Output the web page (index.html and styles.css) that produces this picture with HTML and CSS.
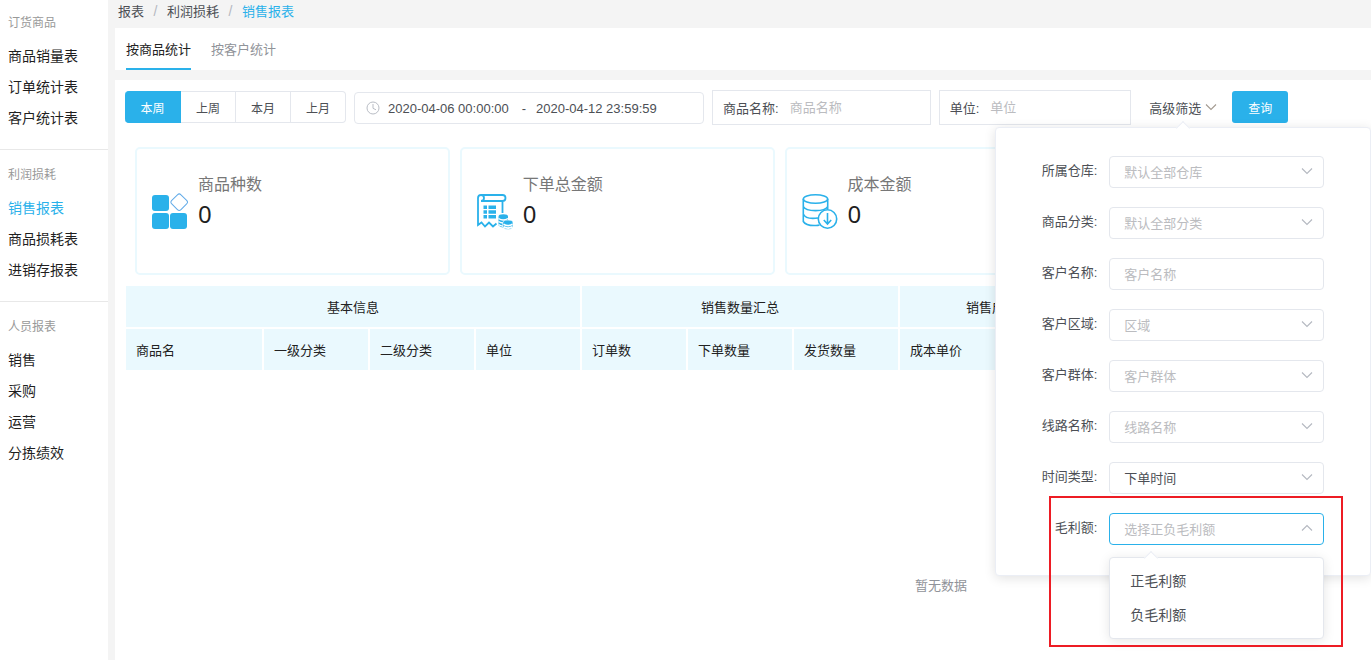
FILE: index.html
```html
<!DOCTYPE html>
<html lang="zh-CN">
<head>
<meta charset="utf-8">
<title>销售报表</title>
<link rel="stylesheet" href="styles.css">
</head>
<body>
<svg class="sprite" aria-hidden="true">
  <symbol id="chevron" viewBox="0 0 12 12"><path d="M1 3.5 6 8.5 11 3.5" fill="none" stroke="currentColor" stroke-width="1.1"/></symbol>
</svg>
<div class="layout">
  <nav class="sidebar">
    <section class="group">
      <h2 class="group-title">订货商品</h2>
      <a class="item" href="#">商品销量表</a>
      <a class="item" href="#">订单统计表</a>
      <a class="item" href="#">客户统计表</a>
    </section>
    <section class="group">
      <h2 class="group-title">利润损耗</h2>
      <a class="item active" href="#">销售报表</a>
      <a class="item" href="#">商品损耗表</a>
      <a class="item" href="#">进销存报表</a>
    </section>
    <section class="group">
      <h2 class="group-title">人员报表</h2>
      <a class="item" href="#">销售</a>
      <a class="item" href="#">采购</a>
      <a class="item" href="#">运营</a>
      <a class="item" href="#">分拣绩效</a>
    </section>
  </nav>
  <main class="main">
    <div class="breadcrumb">
      <a href="#">报表</a><span class="sep">/</span><a href="#">利润损耗</a><span class="sep">/</span><a class="current" href="#">销售报表</a>
    </div>
    <div class="tabs" role="tablist">
      <button class="tab selected" role="tab" aria-selected="true">按商品统计</button>
      <button class="tab" role="tab" aria-selected="false">按客户统计</button>
    </div>
    <div class="content">
      <div class="toolbar">
        <div class="periods">
          <button class="period on">本周</button>
          <button class="period">上周</button>
          <button class="period">本月</button>
          <button class="period">上月</button>
        </div>
        <div class="range">
          <svg class="clock" viewBox="0 0 14 14" fill="none" stroke="currentColor"><circle cx="7" cy="7" r="6"/><path d="M7 3v4.300l3 1.500"/></svg>
          <input class="date" aria-label="开始时间" value="2020-04-06 00:00:00">
          <span class="dash">-</span>
          <input class="date" aria-label="结束时间" value="2020-04-12 23:59:59">
        </div>
        <label class="field"><span>商品名称:</span><input placeholder="商品名称"></label>
        <label class="field"><span>单位:</span><input placeholder="单位"></label>
        <div class="advanced">
          <button class="trigger">高级筛选<svg class="chevron"><use href="#chevron"/></svg></button>
          <form class="popover">
            <div class="row"><label for="f1">所属仓库:</label><div class="control"><select id="f1" class="empty"><option>默认全部仓库</option></select><svg class="chevron"><use href="#chevron"/></svg></div></div>
            <div class="row"><label for="f2">商品分类:</label><div class="control"><select id="f2" class="empty"><option>默认全部分类</option></select><svg class="chevron"><use href="#chevron"/></svg></div></div>
            <div class="row"><label for="f3">客户名称:</label><div class="control"><input id="f3" placeholder="客户名称"></div></div>
            <div class="row"><label for="f4">客户区域:</label><div class="control"><select id="f4" class="empty"><option>区域</option></select><svg class="chevron"><use href="#chevron"/></svg></div></div>
            <div class="row"><label for="f5">客户群体:</label><div class="control"><select id="f5" class="empty"><option>客户群体</option></select><svg class="chevron"><use href="#chevron"/></svg></div></div>
            <div class="row"><label for="f6">线路名称:</label><div class="control"><select id="f6" class="empty"><option>线路名称</option></select><svg class="chevron"><use href="#chevron"/></svg></div></div>
            <div class="row"><label for="f7">时间类型:</label><div class="control"><select id="f7"><option>下单时间</option></select><svg class="chevron"><use href="#chevron"/></svg></div></div>
            <div class="row"><label for="f8">毛利额:</label><div class="control open"><select id="f8" class="empty"><option>选择正负毛利额</option></select><svg class="chevron"><use href="#chevron"/></svg>
              <ul class="menu" role="listbox" aria-label="毛利额"><li role="option">正毛利额</li><li role="option">负毛利额</li></ul>
            </div><div class="highlight"></div></div>
          </form>
        </div>
        <button class="query">查询</button>
      </div>
      <div class="cards">
        <div class="card">
          <svg class="card-icon" viewBox="0 0 36 38"><g fill="#2ab1ea"><rect x="0" y="3" width="17" height="16" rx="3"/><rect x="0" y="21" width="17" height="16" rx="3"/><rect x="18" y="21" width="17" height="16" rx="3"/></g><rect x="20.700" y="3.700" width="13" height="13" rx="2.500" transform="rotate(45 27.200 10.200)" fill="#fff" stroke="#62abe8"/></svg>
          <div class="card-text"><div class="card-label">商品种数</div><div class="card-value">0</div></div>
        </div>
        <div class="card">
          <svg class="card-icon" viewBox="0 0 36 38" fill="none" stroke="#2ab1ea" stroke-width="1.800"><path d="M4 9H25.500Q28.500 9 28.500 6T25.500 3H4Q1 3 1 6V33L4.500 30.500 8 34.500 12 30.500 16 34.500 19.500 31.500M4 9Q7 9 7 6T4 3M25.500 9V21"/><path d="M6.500 15.200H10M11.500 15.200H19M6.500 20H10M11.500 20H19M6.500 24.800H10M11.500 24.800H19" stroke-width="3.400"/><g stroke="none"><path d="M21.500 24.500Q21.500 22.300 26.300 22.300T31 24.500V33.500Q29 35.500 26.300 35.500T21.500 33.500Z" fill="#2ab1ea"/><path d="M21.500 26.500Q26 29.500 31 26.500M21.500 29.500Q26 32.500 31 29.500M21.500 32.500Q24 34.500 27 34" stroke="#fff" stroke-width="1.300"/><path d="M25.700 31Q25.700 28 31 28T36 31V35Q34.500 37.500 31 37.500T25.700 35Z" fill="#2ab1ea" stroke="#fff" stroke-width=".7"/><path d="M26.500 32.300Q31 35 35.500 32.300M26.500 34.800Q31 37.300 35.500 34.800" stroke="#fff"/></g></svg>
          <div class="card-text"><div class="card-label">下单总金额</div><div class="card-value">0</div></div>
        </div>
        <div class="card">
          <svg class="card-icon" viewBox="0 0 36 38" fill="none" stroke="#2ab1ea" stroke-width="1.600"><ellipse cx="13.500" cy="7" rx="12.200" ry="4.200"/><path d="M1.300 7V29.500Q4 34 14 33.500Q16 33.500 17.500 33M25.700 7V17M1.300 14.500C4 20 23 20 25.700 14.500M1.300 22C3 26 9 27 16 26"/><circle cx="25.500" cy="27" r="9.200" fill="#fff"/><path d="M25.500 21V32M21.800 28 25.500 32 29.200 28"/></svg>
          <div class="card-text"><div class="card-label">成本金额</div><div class="card-value">0</div></div>
        </div>
      </div>
      <table class="report">
        <colgroup><col class="wide"><col span="8"></colgroup>
        <thead>
          <tr class="groups"><th colspan="4">基本信息</th><th colspan="3">销售数量汇总</th><th colspan="2">销售成本汇总</th></tr>
          <tr><th>商品名</th><th>一级分类</th><th>二级分类</th><th>单位</th><th>订单数</th><th>下单数量</th><th>发货数量</th><th>成本单价</th><th>成本金额</th></tr>
        </thead>
      </table>
      <p class="no-data">暂无数据</p>
    </div>
  </main>
</div>
</body>
</html>
```

FILE: styles.css
```css
* { box-sizing: border-box; }
body, button, input, select {
  font-family: "Liberation Sans", "Noto Sans CJK SC", sans-serif;
  font-size: 13px;
  color: #4c4f55;
}
body { margin: 0; background: #f4f4f4; overflow: hidden; }
a { color: inherit; text-decoration: none; }
button { padding: 0; border: 0; background: none; cursor: pointer; }
input, select { border: 0; outline: 0; background: none; padding: 0; margin: 0; min-width: 0; }
::placeholder { color: #bbbcc0; opacity: 1; }
.sprite { display: none; }

.layout { display: flex; min-height: 100vh; }

.sidebar { flex: none; width: 108px; background: #fff; }
.group { padding: 13px 8px 15px; border-bottom: 1px solid #e8e8e8; }
.group:first-child { padding-top: 11px; }
.group:last-child { border-bottom: 0; }
.group-title { margin: 0 0 6px; font-size: 12px; font-weight: 400; line-height: 24px; color: #999; }
.item { display: block; font-size: 14px; line-height: 31px; color: #1f1f1f; white-space: nowrap; }
.item.active { color: #2ab1ea; }

.main { flex: 1; min-width: 0; margin-left: 7px; display: flex; flex-direction: column; overflow: hidden; }
.breadcrumb { display: flex; gap: 9px; height: 28px; padding-left: 3px; line-height: 23px; }
.sep { width: 5px; text-align: center; color: #b4b8c0; font-size: 14px; }
.current { color: #2ab1ea; }
.tabs { display: flex; gap: 20px; height: 42px; padding-left: 11px; margin-bottom: 10px; background: #fff; }
.tab { border-bottom: 2px solid transparent; color: #909399; }
.tab.selected { border-color: #2ab1ea; color: #222; }

.content { flex: 1; min-width: 1652px; padding: 10px; background: #fff; }
.toolbar { display: flex; align-items: center; gap: 8px; height: 34px; }
.periods { display: flex; height: 32px; }
.period { width: 55px; border: 1px solid #e4e7ed; border-left: 0; font-size: 12px; }
.period:last-child { border-radius: 0 4px 4px 0; }
.period.on { width: 56px; border-color: #2ab1ea; border-radius: 4px 0 0 4px; background: #2ab1ea; color: #fff; }
.range { display: flex; align-items: center; align-self: flex-end; width: 350px; height: 32px; padding-left: 11px; border: 1px solid #e4e7ed; border-radius: 4px; }
.clock { width: 14px; height: 14px; margin-right: 8px; color: #b9bdc5; }
.date { width: 124px; height: 30px; }
.dash { width: 24px; text-align: center; }
.field { display: flex; align-items: center; align-self: flex-start; gap: 11px; height: 35px; padding-left: 10px; border: 1px solid #e4e7ed; white-space: nowrap; }
.field input { width: 140px; height: 33px; }
.advanced { position: relative; margin: 0 7px 0 10px; }
.trigger { display: flex; align-items: center; gap: 4px; height: 32px; }
.chevron { width: 12px; height: 12px; color: #b4b8c0; }
.trigger .chevron { color: #a39a90; }
.query { width: 56px; height: 32px; border-radius: 3px; background: #2ab1ea; color: #fff; font-size: 12px; }

.popover {
  position: absolute; z-index: 2; top: 36px; left: 50%; width: 376px; transform: translateX(-50%);
  padding: 28px 0 30px; display: grid; gap: 19px;
  background: #fff; border: 1px solid #ebeef5; border-radius: 4px; box-shadow: 0 2px 12px rgba(0, 0, 0, .12);
}
.popover::before, .menu::before {
  content: ""; position: absolute; top: -5px; left: 50%; width: 9px; height: 9px; margin-left: -5px;
  background: #fff; border: solid #ebeef5; border-width: 1px 0 0 1px; transform: rotate(45deg);
}
.row { position: relative; display: grid; grid-template-columns: 101px 215px; gap: 12px; line-height: 30px; }
.row label { text-align: right; }
.control { position: relative; }
.control input, .control select { display: block; appearance: none; width: 100%; height: 32px; padding: 0 14px; border: 1px solid #e4e7ed; border-radius: 4px; }
.control .empty { color: #bbbcc0; }
.control .chevron { position: absolute; top: 9px; right: 11px; pointer-events: none; }
.control.open select { border-color: #2ab1ea; }
.control.open .chevron { transform: rotate(180deg); }
.menu {
  position: absolute; top: 44px; left: 0; width: 100%; margin: 0; padding: 6px 0; list-style: none;
  background: #fff; border: 1px solid #e4e7ed; border-radius: 4px; box-shadow: 0 2px 12px rgba(0, 0, 0, .1);
}
.menu::before { left: 41px; }
.menu li { padding: 0 20px; font-size: 14px; line-height: 34px; }
.highlight { position: absolute; top: -17px; left: 53px; width: 294px; height: 151px; border: 2px solid #ed1c24; pointer-events: none; }

.cards { display: grid; grid-template-columns: repeat(5, 1fr); gap: 10px; margin: 23px 8px 11px 10px; }
.card { display: flex; align-items: center; gap: 10px; height: 128px; padding: 0 15px; border: 2px solid #eaf9fe; border-radius: 5px; }
.card-icon { width: 36px; height: 38px; }
.card-text { padding-bottom: 24px; }
.card-label { font-size: 16px; line-height: 29px; color: #777; }
.card-value { font-family: "Noto Sans", sans-serif; font-size: 24px; line-height: 30px; color: #1f1f1f; }

.report { table-layout: fixed; width: 986px; margin-left: 1px; border-collapse: separate; border-spacing: 0; }
.report col { width: 106px; }
.report col.wide { width: 138px; }
.report th { height: 43px; padding: 0 10px; border: solid #fff; border-width: 0 2px 2px 0; background: #eaf9fe; background-clip: padding-box; font-weight: 400; text-align: left; color: #222; }
.report .groups th { text-align: center; }
.no-data { margin: 204px 0 0; text-align: center; line-height: 20px; color: #909399; }
```
